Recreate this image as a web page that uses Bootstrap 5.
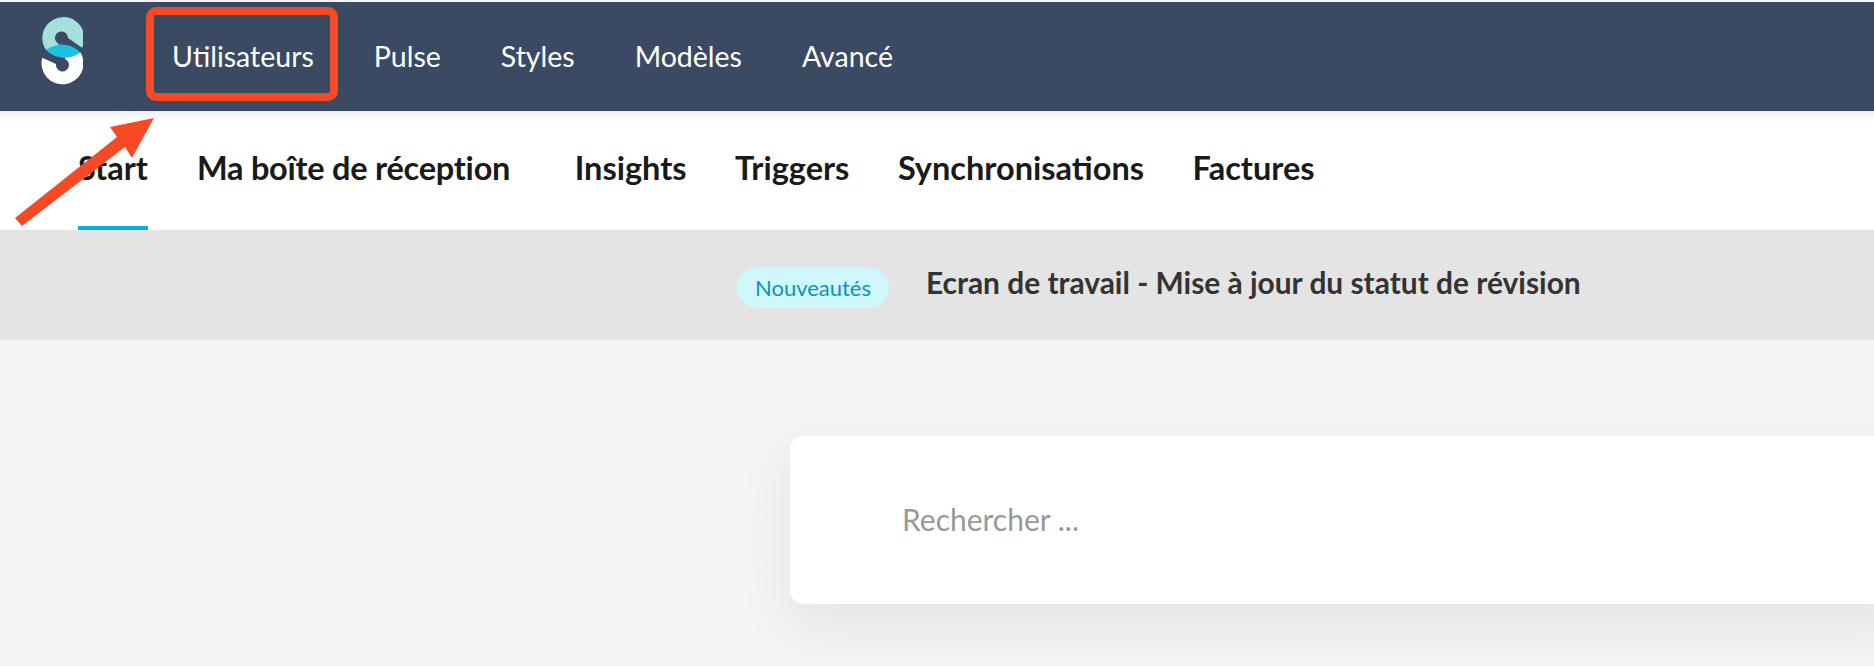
<!DOCTYPE html>
<html lang="fr">
<head>
    <meta charset="UTF-8">
    <meta name="viewport" content="width=device-width, initial-scale=1.0">
    <title>Utilisateurs</title>
    <link href="https://cdn.jsdelivr.net/npm/bootstrap@5.3.3/dist/css/bootstrap.min.css" rel="stylesheet">
    <style>
        html, body { height: 100%; overflow: hidden; }
        body { font-family: 'Lato', sans-serif; background: #f4f4f4; padding-top: 2px; position: relative; }
        .top-bar { background-color: #3b4a63; height: 109px; padding: 0 0 0 41px; }
        .top-bar .logo-s { width: 42px; height: 70px; margin-top: -9px; margin-right: 89px; }
        .top-bar .nav { gap: 60px; }
        .top-bar .nav-link { color: #fff; font-size: 28.5px; padding: 0; }
        .sub-tabs { background: #fff; height: 119px; padding-left: 78px; box-shadow: inset 0 14px 12px -12px rgba(0,0,30,.1); }
        .sub-tabs .nav { gap: 48.5px; height: 100%; }
        .sub-tabs .nav-link { color: #1a1a1a; font-size: 32.5px; font-weight: 700; padding: 0; height: 100%; display: flex; align-items: center; border-bottom: 4px solid transparent; }
        .sub-tabs .nav-link.active { color: #1a1a1a; border-bottom-color: #00b4d8; }
        .sub-tabs .spaced { margin-left: .5px; margin-right: 16px; }
        .sub-tabs .spaced .nav-link { letter-spacing: -.24px; }
        .news-bar { background: #e4e4e4; height: 110px; padding-left: 737px; }
        .news-pill { background: #cff8fd; color: #0e93b5; font-size: 22px; height: 41px; width: 152px; border-radius: 21px; margin-top: 4px; margin-right: 37px; }
        .news-title { color: #333; font-size: 29.9px; font-weight: 700; margin-top: -6px; }
        .search-box { background: #fff; height: 168px; margin: 96px -40px 0 790px; padding-left: 112px; border-radius: 14px; box-shadow: 0 20px 60px rgba(0,0,0,.07); }
        .search-box input { border: 0; outline: 0; background: transparent; width: 500px; font-size: 30px; padding: 0; margin-top: -2px; }
        .search-box input::placeholder { color: #999; opacity: 1; }
        .callout-box { position: absolute; left: 146px; top: 7px; width: 192px; height: 94px; border: 8px solid #f54a25; border-radius: 10px; }
        .callout-arrow { position: absolute; left: 0; top: 100px; }
    </style>
</head>
<body>
    <nav class="top-bar d-flex align-items-center">
        <svg class="logo-s" viewBox="0 0 42 70">
            <path fill="#fff" d="M1.3 40.7 L15 47 A6.5 6.5 0 1 0 24 42 L24 40 L39.5 35.5 A21 21 0 1 1 1.3 40.7Z"/>
            <path fill="#a4e0dd" d="M41 30.7 L27 21 A6.5 6.5 0 1 0 18 27 L18 29 L5 33 A21 21 0 1 1 41 30.7Z"/>
            <path fill="#1ac3e2" d="M5 33 A26 26 0 0 1 39.5 35.5 A26 26 0 0 1 5 33Z"/>
        </svg>
        <ul class="nav">
            <li class="nav-item"><a class="nav-link" href="#">Utilisateurs</a></li>
            <li class="nav-item"><a class="nav-link" href="#">Pulse</a></li>
            <li class="nav-item"><a class="nav-link" href="#">Styles</a></li>
            <li class="nav-item"><a class="nav-link" href="#">Modèles</a></li>
            <li class="nav-item"><a class="nav-link" href="#">Avancé</a></li>
        </ul>
    </nav>

    <div class="sub-tabs">
        <ul class="nav">
            <li class="nav-item"><a class="nav-link active" href="#">Start</a></li>
            <li class="nav-item spaced"><a class="nav-link" href="#">Ma boîte de réception</a></li>
            <li class="nav-item"><a class="nav-link" href="#">Insights</a></li>
            <li class="nav-item"><a class="nav-link" href="#">Triggers</a></li>
            <li class="nav-item"><a class="nav-link" href="#">Synchronisations</a></li>
            <li class="nav-item"><a class="nav-link" href="#">Factures</a></li>
        </ul>
    </div>

    <div class="news-bar d-flex align-items-center">
        <span class="news-pill d-flex align-items-center justify-content-center">Nouveautés</span>
        <span class="news-title">Ecran de travail - Mise à jour du statut de révision</span>
    </div>

    <div class="search-box d-flex align-items-center">
        <input type="text" placeholder="Rechercher ...">
    </div>

    <div class="callout-box"></div>
    <svg class="callout-arrow" width="170" height="135" viewBox="0 100 170 135">
        <polygon fill="#f54a25" points="154,118 110,127 117,137 15,218 22,226 125,147 132,158"/>
    </svg>

    <script src="https://cdn.jsdelivr.net/npm/bootstrap@5.3.3/dist/js/bootstrap.bundle.min.js"></script>
</body>
</html>
